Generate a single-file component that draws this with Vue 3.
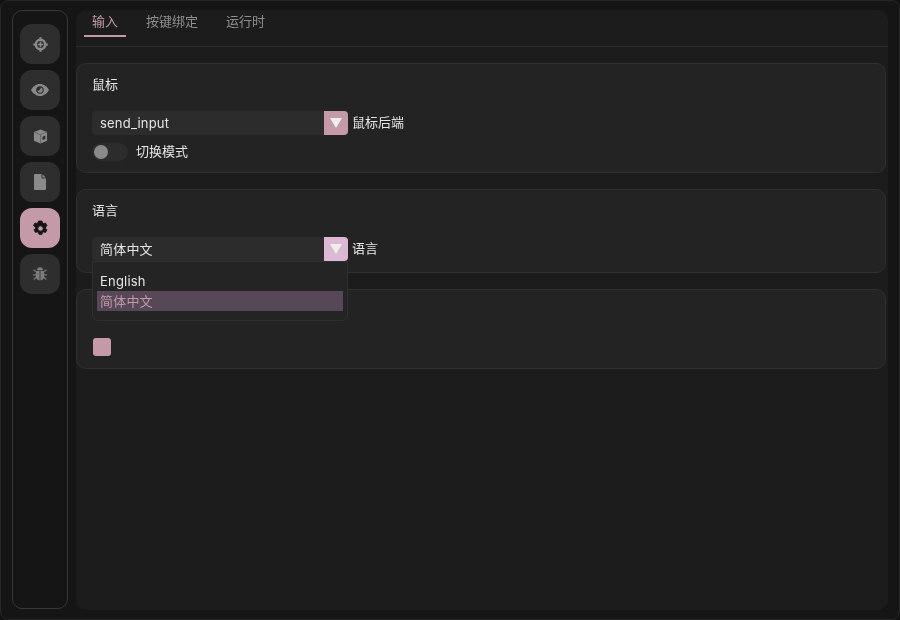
<script setup>
import { ref } from 'vue'

const tabs = ['输入', '按键绑定', '运行时']
const activeTab = ref(0)

const navItems = [
  { id: 'target', type: 'crosshair' },
  { id: 'eye', type: 'eye' },
  { id: 'cube', type: 'cube' },
  { id: 'file', type: 'file' },
  { id: 'gear', type: 'gear', active: true },
  { id: 'bug', type: 'bug' }
]
</script>

<template>
  <div class="window">
    <aside class="sidebar">
      <button v-for="item in navItems" :key="item.id" class="nav-btn" :class="{ active: item.active }">
        <svg v-if="item.type === 'crosshair'" viewBox="0 0 16 16" class="icon">
          <circle cx="8" cy="8" r="5" fill="none" stroke="currentColor" stroke-width="2.600" />
          <path stroke="currentColor" stroke-width="2.400" fill="none" d="M8 .3v3.900M8 11.800v3.900M.3 8h3.900M11.800 8h3.900" />
          <path stroke="currentColor" stroke-width="1.800" fill="none" d="M5 8h6M8 5v6" />
        </svg>
        <svg v-else-if="item.type === 'eye'" viewBox="0 0 18 12" class="icon eye">
          <path fill="currentColor" fill-rule="evenodd" d="M9 0c3.800 0 7 2.400 9 6-2 3.600-5.200 6-9 6S2 9.600 0 6c2-3.600 5.200-6 9-6Zm0 2.200a3.800 3.800 0 1 0 0 7.600 3.800 3.800 0 0 0 0-7.600Z" />
          <path fill="currentColor" d="M9.800 3.500a2.700 2.700 0 1 1-3.400 3.200c1.800.3 3.400-1.200 3.400-3.200Z" />
        </svg>
        <svg v-else-if="item.type === 'cube'" viewBox="0 0 16 16" class="icon">
          <path fill="currentColor" fill-rule="evenodd" d="M8 .5 15 3.200v9.400L8 15.500 1 12.600V3.200ZM13.200 7l-3 1.200v3.600l3-1.200Z" />
          <path stroke="#555555" stroke-width=".7" fill="none" d="M1.300 3.400 8 6l6.700-2.600M8 6v9.200" />
        </svg>
        <svg v-else-if="item.type === 'file'" viewBox="0 0 12 16" class="icon file">
          <path fill="currentColor" d="M1 0h6.500v3.500c0 .6.400 1 1 1H12V15a1 1 0 0 1-1 1H1a1 1 0 0 1-1-1V1a1 1 0 0 1 1-1Z" />
          <path fill="currentColor" d="M8.500.3 11.700 3.500H8.500Z" />
        </svg>
        <svg v-else-if="item.type === 'gear'" viewBox="0 0 16 16" class="icon gear">
          <path fill="currentColor" stroke="currentColor" stroke-width=".8" stroke-linejoin="round" fill-rule="evenodd" d="M6.600 1h2.800l.5 1.700 1 .6 1.800-.5 1.400 2.500-1.300 1.300v1.300l1.300 1.300-1.400 2.500-1.800-.5-1 .6-.5 1.700H6.600l-.5-1.700-1-.6-1.800.5-1.400-2.500 1.300-1.300V6.600L1.400 5.300l1.400-2.500 1.800.5 1-.6.500-1.700ZM8 5.500a2.500 2.500 0 1 0 0 5 2.500 2.500 0 0 0 0-5Z" />
        </svg>
        <svg v-else viewBox="0 0 16 16" class="icon bug">
          <path fill="currentColor" d="M5 4.200a3 3 0 0 1 6 0Z" />
          <path fill="currentColor" d="M4.600 5h3v9.500A4 4 0 0 1 3.800 10V6c0-.5.300-1 .8-1Zm3.800 0h3c.5 0 .8.500.8 1v4a4 4 0 0 1-3.800 4.500Z" />
          <path stroke="currentColor" stroke-width="1.300" fill="none" d="M3.800 5.600 1.500 3.800M12.200 5.600l2.300-1.800M3.800 8.800H1M12.200 8.800H15M4 11.500l-2.300 2M12 11.500l2.300 2" />
        </svg>
      </button>
    </aside>

    <main class="main">
      <nav class="tabs">
        <div v-for="(tab, i) in tabs" :key="tab" class="tab" :class="{ current: i === activeTab }">{{ tab }}</div>
      </nav>

      <div class="content">
        <section class="card mouse">
          <h3 class="card-title">鼠标</h3>
          <div class="row">
            <div class="select">
              <span class="select-value">send_input</span>
              <span class="select-arrow"><i class="triangle"></i></span>
            </div>
            <span class="label">鼠标后端</span>
          </div>
          <div class="row toggle-row">
            <span class="toggle"><i class="knob"></i></span>
            <span class="label">切换模式</span>
          </div>
        </section>

        <section class="card language">
          <h3 class="card-title">语言</h3>
          <div class="row">
            <div class="select">
              <span class="select-value">简体中文</span>
              <span class="select-arrow hover"><i class="triangle"></i></span>
              <div class="dropdown">
                <div class="option">English</div>
                <div class="option selected">简体中文</div>
              </div>
            </div>
            <span class="label">语言</span>
          </div>
        </section>

        <section class="card third">
          <span class="checkbox"></span>
        </section>
      </div>
    </main>
  </div>
</template>

<style>
html, body {
  background: #111111;
}
</style>

<style scoped>
.window {
  box-sizing: border-box;
  width: 900px;
  height: 620px;
  display: flex;
  gap: 8px;
  padding: 10px 12px 10px 12px;
  background: #151515;
  border: 1px solid #262626;
  border-radius: 8px;
  font-family: Inter, "Noto Sans CJK SC", sans-serif;
  font-size: 13px;
  color: #e6e6e6;
  overflow: hidden;
}
.sidebar {
  box-sizing: border-box;
  width: 56px;
  height: 599px;
  margin: -1px 0 0 -1px;
  flex: none;
  display: flex;
  flex-direction: column;
  align-items: center;
  gap: 6px;
  padding-top: 13px;
  border: 1px solid #383838;
  border-radius: 10px;
}
.nav-btn {
  width: 40px;
  height: 40px;
  flex: none;
  padding: 0;
  border: 0;
  border-radius: 12px;
  background: #2e2e2e;
  color: #8a8a8a;
  display: flex;
  align-items: center;
  justify-content: center;
}
.nav-btn.active {
  background: #c49aa8;
  color: #141414;
}
.icon {
  width: 15px;
  height: 15px;
}
.icon.eye {
  width: 18px;
  height: 12px;
}
.icon.file {
  width: 12px;
  height: 16px;
}
.icon.gear {
  width: 17px;
  height: 17px;
}
.icon.bug {
  width: 16px;
  height: 16px;
  color: #7c7c7c;
}
.main {
  flex: 1;
  min-width: 0;
  margin: -1px -1px -1px 0;
  background: #1c1c1c;
  border-radius: 10px;
  display: flex;
  flex-direction: column;
  will-change: transform;
}
.tabs {
  box-sizing: border-box;
  height: 37px;
  flex: none;
  display: flex;
  gap: 12px;
  padding-left: 8px;
  border-bottom: 1px solid #2a2a2a;
}
.tab {
  box-sizing: border-box;
  height: 27px;
  padding: 2px 8px 0;
  color: #8f8f8f;
  line-height: 18px;
  text-align: center;
  white-space: nowrap;
}
.tab.current {
  color: #c49aa8;
  border-bottom: 2px solid #c49aa8;
}
.content {
  display: flex;
  flex-direction: column;
  gap: 16px;
  padding-top: 16px;
  padding-right: 2px;
}
.card {
  box-sizing: border-box;
  border: 1px solid #303030;
  border-radius: 10px;
  background: #232323;
  padding: 0 15px;
}
.mouse { height: 110px; }
.language { height: 84px; }
.third {
  height: 80px;
  display: flex;
  align-items: flex-end;
  padding-bottom: 12px;
}
.card-title {
  margin: 0;
  padding-top: 11px;
  height: 47px;
  box-sizing: border-box;
  font-size: 13px;
  font-weight: 400;
  line-height: 18px;
}
.row {
  display: flex;
  align-items: center;
  gap: 4px;
  height: 24px;
}
.toggle-row {
  margin-top: 7px;
  gap: 8px;
  height: 20px;
}
.toggle-row .label {
  line-height: 18px;
}
.select {
  position: relative;
  width: 256px;
  height: 24px;
  display: flex;
  background: #2c2c2c;
  border-radius: 4px;
}
.select-value {
  flex: 1;
  padding-left: 8px;
  line-height: 24px;
  letter-spacing: 0.2px;
}
.select-arrow {
  width: 24px;
  height: 24px;
  background: #c49aa8;
  border-radius: 0 4px 4px 0;
  display: flex;
  align-items: center;
  justify-content: center;
}
.select-arrow.hover {
  background: #dcb8d4;
}
.triangle {
  width: 0;
  height: 0;
  border-left: 6px solid transparent;
  border-right: 6px solid transparent;
  border-top: 10px solid #eeeeee;
}
.dropdown {
  position: absolute;
  left: 0;
  top: 24px;
  box-sizing: border-box;
  width: 256px;
  height: 60px;
  padding: 9px 4px 0;
  background: #242424;
  border: 1px solid #303030;
  border-radius: 0 0 6px 6px;
  z-index: 2;
}
.option {
  height: 20px;
  padding-left: 3px;
  line-height: 20px;
  letter-spacing: 0.2px;
}
.option.selected {
  background: #574858;
  color: #c49aa8;
}
.label {
  white-space: nowrap;
  line-height: 22px;
  align-self: flex-start;
}
.toggle {
  width: 36px;
  height: 18px;
  border-radius: 9px;
  background: #2c2c2c;
  display: flex;
  align-items: center;
  padding-left: 2px;
  box-sizing: border-box;
}
.knob {
  width: 14px;
  height: 14px;
  border-radius: 50%;
  background: #8a8a8a;
}
.checkbox {
  width: 18px;
  height: 18px;
  margin-left: 1px;
  border-radius: 3px;
  background: #c49aa8;
}
</style>
